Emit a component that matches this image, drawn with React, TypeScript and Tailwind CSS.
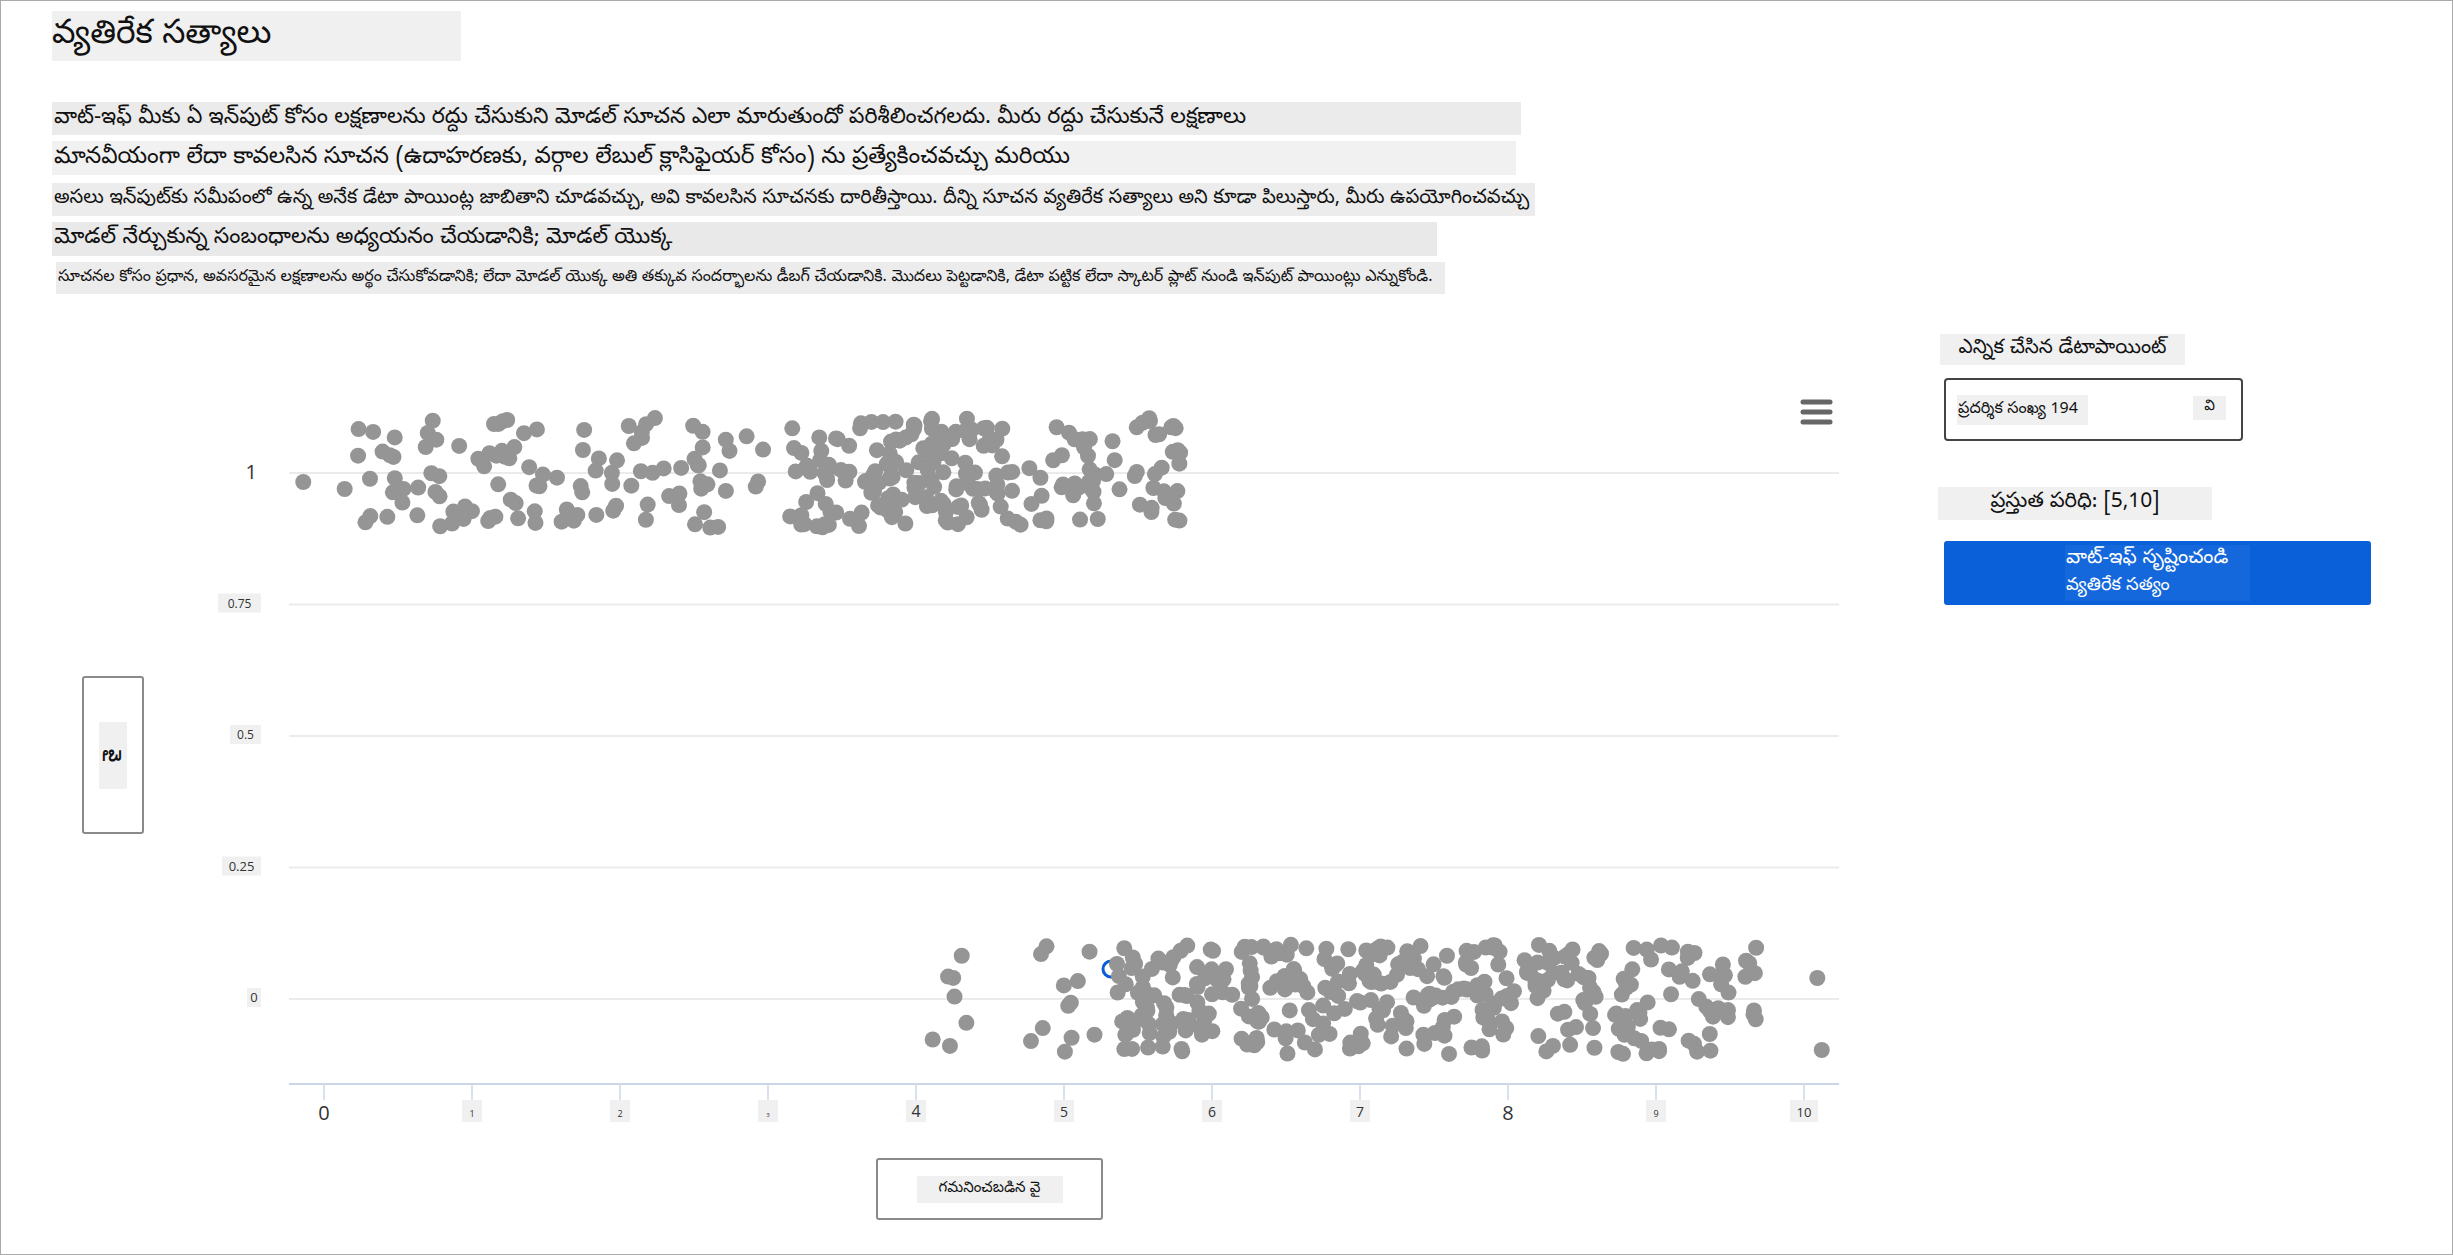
import React from "react";

const TE = "font-['Noto_Sans_Telugu','Noto_Sans','Open_Sans',sans-serif]";

// seeded random so the scatter stays the same on every render
function mulberry32(seed: number) {
  return function () {
    seed |= 0;
    seed = (seed + 0x6d2b79f5) | 0;
    let t = Math.imul(seed ^ (seed >>> 15), 1 | seed);
    t = (t + Math.imul(t ^ (t >>> 7), 61 | t)) ^ t;
    return ((t ^ (t >>> 14)) >>> 0) / 4294967296;
  };
}

// chart geometry (svg coords)
const X0 = 174;
const XSTEP = 148;
const yOf = (v: number) => 619 - 526 * v;
const xOf = (v: number) => X0 + XSTEP * v;

type Pt = { x: number; y: number };

function buildPoints(): Pt[] {
  const rnd = mulberry32(194);
  const pts: Pt[] = [];
  const add = (n: number, lo: number, hi: number, cy: number) => {
    for (let i = 0; i < n; i++) {
      const v = lo + (hi - lo) * rnd();
      pts.push({ x: xOf(v), y: cy + (rnd() * 2 - 1) * 55 });
    }
  };
  // class 1
  pts.push({ x: xOf(-0.14), y: 102 });
  add(50, 0.08, 1.5, yOf(1));
  add(60, 1.1, 2.8, yOf(1));
  add(4, 2.85, 3.02, yOf(1));
  add(90, 3.15, 4.4, yOf(1));
  add(125, 3.7, 5.8, yOf(1));
  // class 0
  add(22, 4.1, 5.4, yOf(0));
  add(340, 5.4, 9.3, yOf(0));
  add(22, 9.3, 9.7, yOf(0));
  pts.push({ x: xOf(10.09), y: 598 });
  pts.push({ x: xOf(10.12), y: 670 });
  return pts;
}

const POINTS = buildPoints();

const yTicks = [
  { v: 1, label: "1", size: 20, bg: false, w: 0 },
  { v: 0.75, label: "0.75", size: 12, bg: true, w: 43 },
  { v: 0.5, label: "0.5", size: 12, bg: true, w: 31 },
  { v: 0.25, label: "0.25", size: 13, bg: true, w: 39 },
  { v: 0, label: "0", size: 13, bg: true, w: 14 },
];

const xTicks = [
  { v: 0, size: 20, bg: false },
  { v: 1, size: 9, bg: true },
  { v: 2, size: 9, bg: true },
  { v: 3, size: 6, bg: true },
  { v: 4, size: 16, bg: true },
  { v: 5, size: 14, bg: true },
  { v: 6, size: 14, bg: true },
  { v: 7, size: 14, bg: true },
  { v: 8, size: 20, bg: false },
  { v: 9, size: 9, bg: true },
  { v: 10, size: 13, bg: true },
];

function ScatterChart() {
  return (
    <svg width={1700} height={750} viewBox="0 0 1700 750" className="block shrink-0">
      {yTicks.map((t) => (
        <line key={t.v} x1={139} x2={1689} y1={yOf(t.v)} y2={yOf(t.v)} stroke="#ebebeb" strokeWidth={2} />
      ))}
      {yTicks.map((t) => (
        <g key={"l" + t.v} fontFamily="'Open Sans', 'Noto Sans', sans-serif" fill="#333">
          {t.bg && <rect x={111 - t.w} y={yOf(t.v) - 11} width={t.w} height={19} fill="#f0f0f0" />}
          <text x={t.bg ? 111 - t.w / 2 : 107} y={yOf(t.v) + (t.bg ? 3 : 6)} fontSize={t.size} textAnchor={t.bg ? "middle" : "end"}>
            {t.label}
          </text>
        </g>
      ))}

      <line x1={139} x2={1689} y1={704} y2={704} stroke="#ccd6eb" strokeWidth={2} />
      {xTicks.map((t) => (
        <g key={"x" + t.v} fontFamily="'Open Sans', 'Noto Sans', sans-serif" fill="#333">
          <line x1={xOf(t.v)} x2={xOf(t.v)} y1={704} y2={720} stroke="#ccd6eb" strokeWidth={1.5} />
          {t.bg && <rect x={xOf(t.v) - 10 - (t.v === 10 ? 4 : 0)} y={720} width={t.v === 10 ? 28 : 20} height={22} fill="#f0f0f0" />}
          <text x={xOf(t.v)} y={t.bg ? 737 : 740} fontSize={t.size} textAnchor="middle">
            {t.v}
          </text>
        </g>
      ))}

      <circle cx={961} cy={589} r={8} fill="none" stroke="#0b5ed7" strokeWidth={3} />
      {POINTS.map((p, i) => (
        <circle key={i} cx={p.x} cy={p.y} r={8} fill="#959595" />
      ))}
      <circle cx={967} cy={584} r={8} fill="#959595" />

      <g stroke="#666" strokeWidth={5} strokeLinecap="round">
        <line x1={1653} x2={1680} y1={22} y2={22} />
        <line x1={1653} x2={1680} y1={32} y2={32} />
        <line x1={1653} x2={1680} y1={42} y2={42} />
      </g>
    </svg>
  );
}

const lines = [
  {
    text: "వాట్-ఇఫ్ మీకు ఏ ఇన్‌పుట్ కోసం లక్షణాలను రద్దు చేసుకుని మోడల్ సూచన ఎలా మారుతుందో పరిశీలించగలదు. మీరు రద్దు చేసుకునే లక్షణాలు",
    cls: "w-[1469px] h-[33px] bg-[#ebebeb] text-[22px]",
  },
  {
    text: "మానవీయంగా లేదా కావలసిన సూచన (ఉదాహరణకు, వర్గాల లేబుల్ క్లాసిఫైయర్ కోసం) ను ప్రత్యేకించవచ్చు మరియు",
    cls: "w-[1464px] h-[34px] bg-[#f1f1f1] text-[23px] mt-[6px]",
  },
  {
    text: "అసలు ఇన్‌పుట్‌కు సమీపంలో ఉన్న అనేక డేటా పాయింట్ల జాబితాని చూడవచ్చు, అవి కావలసిన సూచనకు దారితీస్తాయి. దీన్ని సూచన వ్యతిరేక సత్యాలు అని కూడా పిలుస్తారు, మీరు ఉపయోగించవచ్చు",
    cls: "w-[1483px] h-[33px] bg-[#ececec] text-[19.5px] mt-[8px]",
  },
  {
    text: "మోడల్ నేర్చుకున్న సంబంధాలను అధ్యయనం చేయడానికి; మోడల్ యొక్క",
    cls: "w-[1385px] h-[34px] bg-[#e9e9e9] text-[22px] mt-[6px]",
  },
  {
    text: "సూచనల కోసం ప్రధాన, అవసరమైన లక్షణాలను అర్థం చేసుకోవడానికి; లేదా మోడల్ యొక్క అతి తక్కువ సందర్భాలను డీబగ్ చేయడానికి. మొదలు పెట్టడానికి, డేటా పట్టిక లేదా స్కాటర్ ప్లాట్ నుండి ఇన్‌పుట్ పాయింట్లు ఎన్నుకోండి.",
    cls: "w-[1389px] h-[32px] bg-[#ececec] text-[16px] mt-[6px] ml-[4px]",
  },
];

export default function App() {
  return (
    <div className={`w-[2453px] h-[1255px] border border-[#aaaaaa] bg-white text-[#111] overflow-hidden ${TE}`}>
      <div className="pl-[51px] pt-[10px]">
        <div className="w-[409px] h-[50px] bg-[#f0f0f0] flex items-center text-[33px] leading-none">
          వ్యతిరేక సత్యాలు
        </div>

        <div className="mt-[41px]">
          {lines.map((l, i) => (
            <div key={i} className={`flex items-center whitespace-nowrap overflow-hidden leading-none pl-[2px] ${l.cls}`}>
              {l.text}
            </div>
          ))}
        </div>
      </div>

      <div className="flex mt-[40px]">
        <div className="w-[1937px] shrink-0">
          <div className="flex items-center pt-[46px] pl-[81px]">
            <div className="w-[62px] h-[158px] shrink-0 border-2 border-[#8a8a8a] rounded-[3px] flex items-center justify-center">
              <div className="w-[28px] h-[67px] bg-[#f0f0f0] flex items-center justify-center">
                <span className="rotate-90 whitespace-nowrap text-[17px] font-bold leading-none">వై</span>
              </div>
            </div>
            <div className="ml-[6px]">
              <ScatterChart />
            </div>
          </div>
          <div className="ml-[875px] mt-[28px] w-[227px] h-[62px] border-2 border-[#8a8a8a] rounded-[3px] flex items-center justify-center">
            <div className="w-[146px] h-[27px] bg-[#f0f0f0] flex items-center justify-center text-[15px] leading-none whitespace-nowrap">
              గమనించబడిన వై
            </div>
          </div>
        </div>

        <div className="flex flex-col">
          <div className="ml-[2px] w-[245px] h-[31px] bg-[#f0f0f0] flex items-center justify-center text-[20px] leading-none whitespace-nowrap">
            ఎన్నిక చేసిన డేటాపాయింట్
          </div>
          <div className="ml-[6px] mt-[13px] w-[299px] h-[63px] border-2 border-[#444] rounded-[4px] flex items-center justify-between pl-[11px] pr-[15px]">
            <div className="w-[131px] h-[30px] bg-[#f0f0f0] flex items-center text-[16px] leading-none whitespace-nowrap pl-[1px]">
              ప్రదర్శిక సంఖ్య 194
            </div>
            <div className="w-[33px] h-[24px] bg-[#f0f0f0] flex items-center justify-center text-[15px] leading-none mb-[4px]">
              వి
            </div>
          </div>
          <div className="mt-[46px] w-[274px] h-[33px] bg-[#f0f0f0] flex items-center justify-center text-[21px] leading-none whitespace-nowrap">
            ప్రస్తుత పరిధి: [5,10]
          </div>
          <button className="ml-[6px] mt-[21px] w-[427px] h-[64px] bg-[#0a60d8] rounded-[3px] flex items-stretch justify-center py-[4px] text-white">
            <div className="w-[185px] bg-[#1468dc] flex flex-col justify-center items-start pl-[1px] leading-none whitespace-nowrap">
              <span className="text-[20px]">వాట్-ఇఫ్ సృష్టించండి</span>
              <span className="text-[18px] mt-[8px]">వ్యతిరేక సత్యం</span>
            </div>
          </button>
        </div>
      </div>
    </div>
  );
}
